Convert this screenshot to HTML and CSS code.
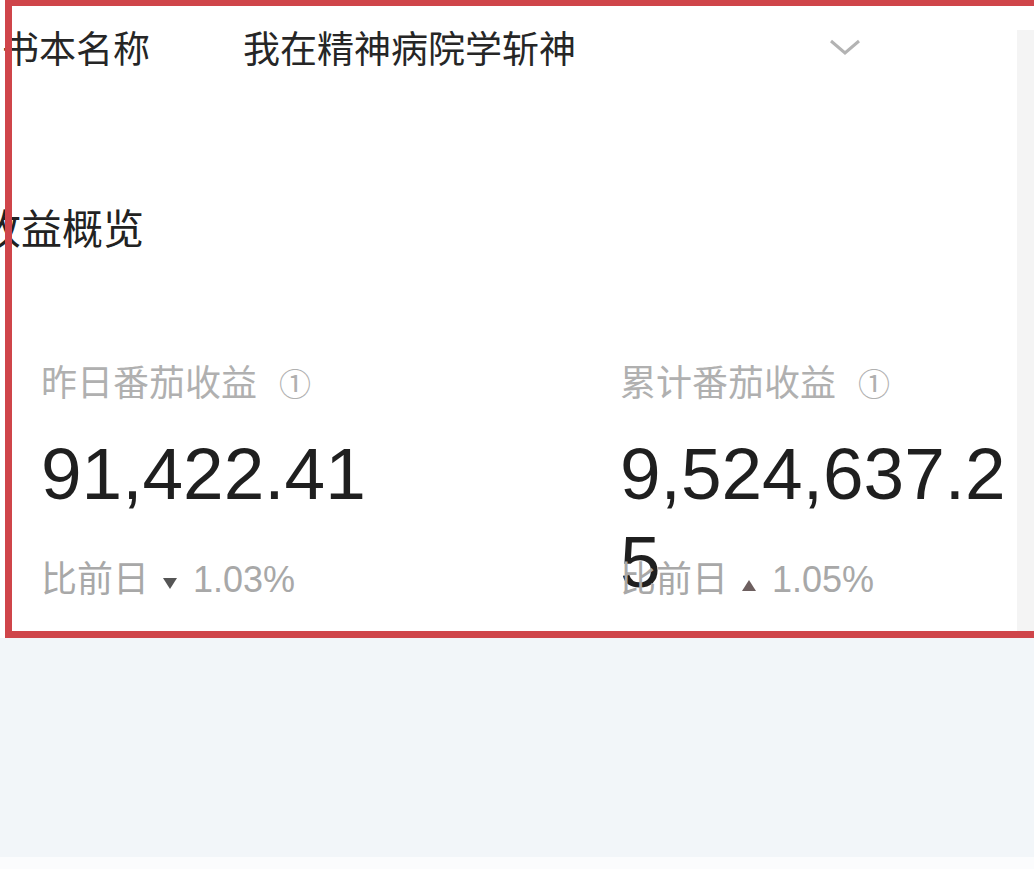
FILE: index.html
```html
<!DOCTYPE html>
<html lang="zh-CN">
<head>
    <meta charset="UTF-8">
    <meta name="viewport" content="width=device-width, initial-scale=1.0">
    <title>收益概览</title>
    <link rel="stylesheet" href="styles.css">
</head>
<body>
    <div class="screen">
        <div class="sheet">
            <div class="panel">
                <!-- Book selector -->
                <div class="book-row">
                    <span class="book-label">书本名称</span>
                    <span class="book-value">我在精神病院学斩神</span>
                    <svg class="chevron" width="32" height="18" viewBox="0 0 32 18">
                        <polyline points="2,3 16,15 30,3" fill="none" stroke="#b3b3b3" stroke-width="3"/>
                    </svg>
                </div>

                <h2 class="section-title">收益概览</h2>

                <!-- Income stats -->
                <div class="stats">
                    <div class="stat">
                        <div class="stat-label">昨日番茄收益<span class="info">①</span></div>
                        <div class="stat-value">91,422.41</div>
                        <div class="stat-compare">比前日<span class="tri tri-down"></span>1.03%</div>
                    </div>
                    <div class="stat">
                        <div class="stat-label">累计番茄收益<span class="info">①</span></div>
                        <div class="stat-value">9,524,637.25</div>
                        <div class="stat-compare">比前日<span class="tri tri-up"></span>1.05%</div>
                    </div>
                </div>
            </div>
            <div class="edge"></div>
        </div>
        <div class="blank"></div>
        <div class="foot"></div>

        <!-- annotation frame drawn over the page -->
        <div class="mark"></div>
    </div>
</body>
</html>
```

FILE: styles.css
```css
html, body {
    margin: 0;
    padding: 0;
    overflow: hidden;
}

body {
    font-family: 'Liberation Sans', 'Noto Sans CJK SC', sans-serif;
    background-color: #ffffff;
    color: #222;
}

.screen {
    position: relative;
    width: 1034px;
    height: 869px;
}

.sheet {
    display: flex;
    height: 638px;
    background-color: #ffffff;
}

.panel {
    width: 1017px;
    flex-shrink: 0;
}

.edge {
    flex: 1;
    margin-top: 30px;
    background-color: #f4f4f4;
}

.blank {
    height: 219px;
    background-color: #f2f6f9;
}

.foot {
    height: 12px;
    background-color: #fbfcfd;
}

.book-row {
    display: flex;
    align-items: center;
    height: 94px;
    padding-left: 2px;
    font-size: 37px;
    color: #262626;
}

.book-label {
    width: 241px;
}

.book-value {
    flex: 1;
}

.chevron {
    margin-right: 156px;
}

.section-title {
    margin: 116px 0 0 -20px;
    font-size: 41px;
    line-height: 41px;
    font-weight: normal;
    color: #222;
}

.stats {
    display: grid;
    grid-template-columns: 579px 396px;
    padding-left: 41px;
    margin-top: 115px;
}

.stat-label {
    font-size: 36px;
    line-height: 36px;
    color: #b0b0b0;
}

.info {
    margin-left: 22px;
    font-size: 32px;
}

.stat-value {
    margin-top: 27px;
    height: 88px;
    font-size: 73px;
    line-height: 88px;
    color: #1f1f1f;
    word-break: break-all;
}

.stat-compare {
    margin-top: 44px;
    font-size: 36px;
    line-height: 36px;
    color: #a8a8a8;
}

.tri {
    display: inline-block;
    width: 0;
    height: 0;
    margin: 0 16px 0 14px;
    border-left: 7px solid transparent;
    border-right: 7px solid transparent;
}

.tri-down {
    border-top: 11px solid #555;
    vertical-align: 3px;
}

.tri-up {
    border-bottom: 11px solid #6d5f5f;
    vertical-align: 1px;
}

.mark {
    position: absolute;
    top: -1px;
    left: 5px;
    right: -20px;
    height: 639px;
    box-sizing: border-box;
    border: 7px solid #cf454a;
}
```
